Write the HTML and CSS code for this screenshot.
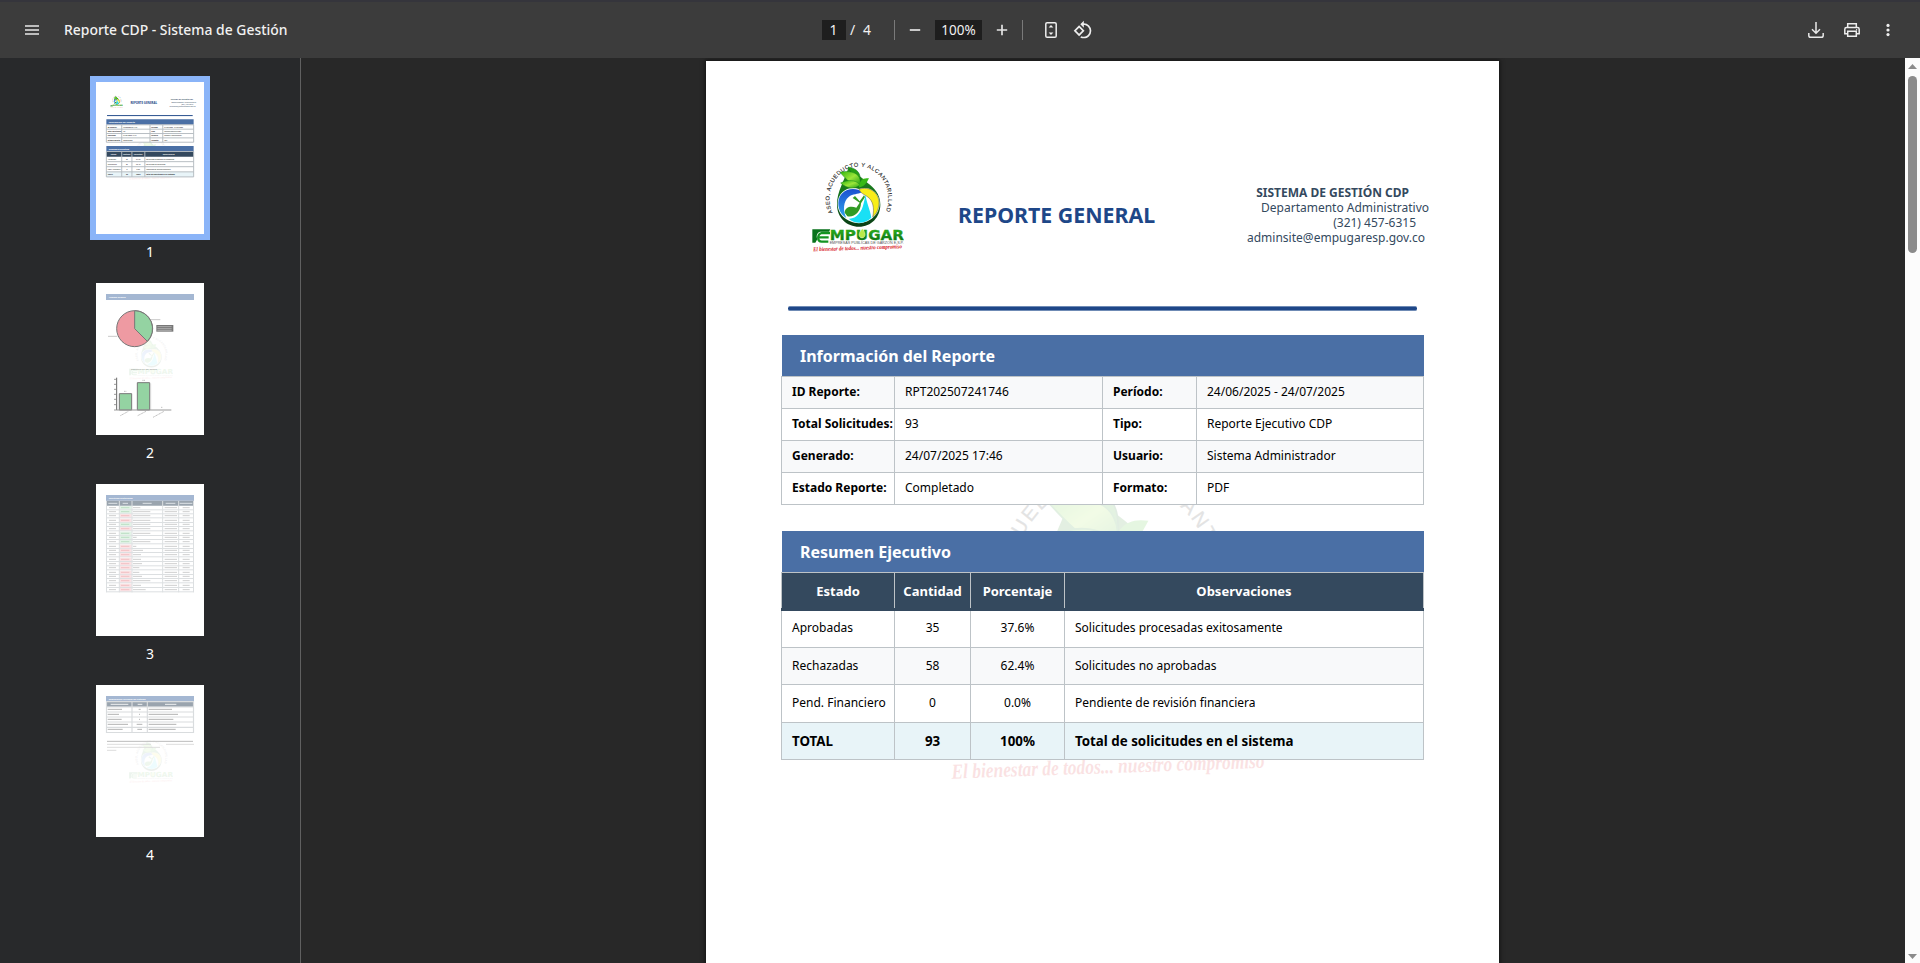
FILE: index.html
```html
<!DOCTYPE html>
<html lang="es">
<head>
<meta charset="utf-8">
<title>Reporte CDP - Sistema de Gestión</title>
<link rel="stylesheet" href="styles.css">
</head>
<body>
<svg class="defs" width="0" height="0" aria-hidden="true">
  <defs>
    <linearGradient id="drop" x1="0" y1="0" x2="0" y2="1"><stop offset="0" stop-color="#2c8f1a"/><stop offset=".5" stop-color="#0f6d1e"/><stop offset="1" stop-color="#0a3d14"/></linearGradient>
    <linearGradient id="leaf" x1="0" y1="0" x2="1" y2="1"><stop offset="0" stop-color="#2fb50c"/><stop offset=".5" stop-color="#9be53a"/><stop offset="1" stop-color="#1d9c12"/></linearGradient>
    <linearGradient id="blue" x1="0" y1="0" x2="0" y2="1"><stop offset="0" stop-color="#1c4fd0"/><stop offset="1" stop-color="#2fa6ee"/></linearGradient>
    <linearGradient id="word" x1="0" y1="0" x2="0" y2="1"><stop offset="0" stop-color="#35c11d"/><stop offset="1" stop-color="#076012"/></linearGradient>
    <symbol id="logo" viewBox="96 60 276 276">
      <path id="arc" d="M158 219A88 96 0 1 1 317 215" fill="none"/>
      <text font-family="Liberation Sans" font-size="17" fill="#222" stroke="#222" stroke-width=".3"><textPath href="#arc" textLength="386" lengthAdjust="spacing">ASEO, ACUEDUCTO Y ALCANTARILLADO</textPath></text>
      <path d="M205 84C192 125 171 154 171 194C171 232 200 260 237 260C274 260 301 231 301 194C301 160 280 142 262 128C240 108 222 96 205 84Z" fill="url(#drop)"/>
      <path d="M237 147C205 137 173 155 173 192C173 225 203 248 237 250C271 248 299 223 299 190C299 156 266 136 237 147Z" fill="#fff"/>
      <path d="M237 150C205 139 175 158 175 190C175 210 184 225 199 234C188 211 190 184 206 171C219 161 233 164 245 157Z" fill="url(#blue)"/>
      <path d="M237 148C268 137 297 158 297 188C297 206 290 221 278 231C284 205 279 181 262 170C253 163 241 160 237 148Z" fill="#f8ee18" stroke="#555" stroke-width="1.5"/>
      <path d="M206 236C228 238 246 216 251 190L257 164C259 188 270 206 274 233C254 253 224 252 206 236Z" fill="#19e0f5"/>
      <path d="M194 218C195 202 211 197 229 203L239 188L218 174L225 168L239 184L252 166L255 171L243 190C242 215 224 233 202 229Z" fill="#319b24"/>
      <path d="M204 81C230 85 246 98 240 133C225 120 216 103 204 81Z" fill="#259e14" stroke="#0f6d1e" stroke-width="1.5"/>
      <path d="M180 97C203 91 231 96 238 113C242 121 241 128 240 137C214 134 203 123 180 97Z" fill="url(#leaf)" stroke="#17871a" stroke-width="1.5"/>
      <path d="M182 129C202 119 227 118 240 135C223 149 203 147 182 129Z" fill="url(#leaf)" stroke="#17871a" stroke-width="1.5"/>
      <path d="M267 115C248 112 238 122 237 142C254 140 259 130 267 115Z" fill="#36b915"/>
      <path d="M97 268H151L147 275H120C111 278 108 287 112 298L106 308H97Z" fill="#08721b"/>
      <path d="M150 279H125C111 283 111 305 125 305H145M118 292H146" fill="none" stroke="#149322" stroke-width="7"/>
      <text x="149" y="300" font-family="DejaVu Sans" font-weight="bold" font-size="43" textLength="223" lengthAdjust="spacingAndGlyphs" fill="url(#word)" stroke="#169a18">MPUGAR</text>
      <path d="M247 266C235 278 233 291 246 294C259 291 258 279 247 266Z" fill="#b9ea4a" stroke="#fff"/>
      <text x="149" y="311" font-family="Liberation Sans" font-size="10" textLength="222" lengthAdjust="spacingAndGlyphs" fill="#555">EMPRESAS PUBLICAS DE GARZON E.S.P.</text>
      <text x="100" y="334" transform="rotate(-2 100 334)" font-family="Liberation Serif" font-style="italic" font-weight="bold" font-size="18" textLength="266" lengthAdjust="spacingAndGlyphs" fill="#d7141c">El bienestar de todos... nuestro compromiso</text>
    </symbol>
  </defs>
</svg>

<header class="toolbar">
  <div class="tb-left">
    <svg class="i-menu" width="14" height="10" viewBox="0 0 14 10"><path d="M0 1H14M0 5H14M0 9H14" stroke="#e8e8e8" stroke-width="1.6"/></svg>
    <span class="doc-title">Reporte CDP - Sistema de Gestión</span>
  </div>
  <div class="tb-center">
    <span class="box page-no">1</span><span class="slash">/</span><span class="total">4</span>
    <i class="sep sep-a"></i>
    <svg class="i-minus" width="12" height="12" viewBox="0 0 12 12"><path d="M.8 6H11.2" stroke="#e4e4e4" stroke-width="1.7"/></svg>
    <span class="box zoom">100%</span>
    <svg class="i-plus" width="12" height="12" viewBox="0 0 12 12"><path d="M.8 6H11.2M6 .8V11.2" stroke="#e4e4e4" stroke-width="1.7"/></svg>
    <i class="sep sep-b"></i>
    <svg class="i-fit" width="12" height="16" viewBox="0 0 12 16"><rect x=".8" y=".8" width="10.4" height="14.4" rx="1.3" fill="none" stroke="#eee" stroke-width="1.5"/><path d="M6 3L8.4 5.6H3.600ZM6 13L8.4 10.4H3.600Z" fill="#eee"/></svg>
    <svg class="i-rot" width="20" height="20" viewBox="0 0 24 24"><path fill="#eee" d="M7.34 6.41.86 12.9l6.49 6.48 6.49-6.48-6.5-6.49zM3.69 12.9l3.66-3.66L11 12.9l-3.66 3.66-3.65-3.66zm15.67-6.26A8.95 8.95 0 0 0 13 4V.76L8.76 5 13 9.24V6c1.79 0 3.58.68 4.95 2.05a7.007 7.007 0 0 1 0 9.9 6.973 6.973 0 0 1-7.79 1.44l-1.49 1.49C10.02 21.62 11.51 22 13 22c2.3 0 4.61-.88 6.36-2.64a8.98 8.98 0 0 0 0-12.72z"/></svg>
  </div>
  <div class="tb-right">
    <svg width="16" height="16" viewBox="0 0 16 16" fill="none" stroke="#e8e8e8" stroke-width="1.5"><path d="M8 0V11M4 7.3L8 11.3L12 7.3M.8 11V13.4Q.8 15.2 2.6 15.2H13.4Q15.2 15.2 15.2 13.4V11"/></svg>
    <svg width="16" height="16" viewBox="0 0 16 16" fill="none" stroke="#eee" stroke-width="1.5"><path d="M3.7 5.5V1.8H12.3V5.5M3.7 11.7H.8V7.2Q.8 5.5 2.5 5.5H13.5Q15.2 5.5 15.2 7.2V11.7H12.3M3.7 9.3H12.3V14.3H3.7Z"/><circle cx="12.6" cy="7.7" r=".7" fill="#eee" stroke="none"/></svg>
    <svg width="16" height="16" viewBox="0 0 16 16" fill="#eee"><circle cx="8" cy="3.4" r="1.6"/><circle cx="8" cy="8" r="1.6"/><circle cx="8" cy="12.6" r="1.6"/></svg>
  </div>
</header>

<main class="body">
  <nav class="thumbs">
    <figure class="thumb active">
      <svg width="108" height="152" viewBox="706 61 794 1118" class="sheet t1">
        <use href="#logo" x="812" y="160" width="92" height="92"/>
        <g font-family="Noto Sans" font-size="12" fill="#111">
          <text x="959" y="223" font-size="21.3" font-weight="700" fill="#1e4788">REPORTE GENERAL</text>
          <g fill="#34495e" font-size="13"><text x="1256" y="197" font-weight="700">SISTEMA DE GESTIÓN CDP</text><text x="1261" y="212">Departamento Administrativo</text><text x="1333" y="227">(321) 457-6315</text><text x="1247" y="242">adminsite@empugaresp.gov.co</text></g>
          <path d="M787 308H1417" stroke="#1e4788" stroke-width="7"/>
          <use href="#logo" x="946" y="456" width="325" height="325" opacity=".12"/>
          <path d="M782 335H1424V376H782ZM782 531H1424V572H782Z" fill="#4a6fa5"/>
          <g fill="#fff" font-weight="700" font-size="16"><text x="800" y="362">Información del Reporte</text><text x="800" y="558">Resumen Ejecutivo</text></g>
          <path d="M782 376H1424V504H782ZM782 610H1424V722H782Z" fill="#fff"/><path d="M782 572H1424V610H782Z" fill="#34495e"/><path d="M782 722H1424V759H782Z" fill="#e8f4f8"/>
          <path d="M782 376H1424V504H782ZM782 408H1424M782 440H1424M782 472H1424M895 376V504M1103 376V504M1197 376V504M782 572H1424V759H782ZM782 647H1424M782 684H1424M782 722H1424M895 572V759M970 572V759M1065 572V759" fill="none" stroke="#b4bac0" stroke-width="7"/>
          <g font-weight="700"><text x="792" y="396">ID Reporte:</text><text x="792" y="428">Total Solicitudes:</text><text x="792" y="460">Generado:</text><text x="792" y="492">Estado Reporte:</text><text x="1113" y="396">Período:</text><text x="1113" y="428">Tipo:</text><text x="1113" y="460">Usuario:</text><text x="1113" y="492">Formato:</text></g>
          <text x="906" y="396">RPT202507241746</text><text x="906" y="428">93</text><text x="906" y="460">24/07/2025 17:46</text><text x="906" y="492">Completado</text><text x="1208" y="396">24/06/2025 - 24/07/2025</text><text x="1208" y="428">Reporte Ejecutivo CDP</text><text x="1208" y="460">Sistema Administrador</text><text x="1208" y="492">PDF</text>
          <g fill="#fff" font-weight="700"><text x="815" y="595">Estado</text><text x="904" y="595">Cantidad</text><text x="983" y="595">Porcentaje</text><text x="1197" y="595">Observaciones</text></g>
          <text x="792" y="632">Aprobadas</text><text x="926" y="632">35</text><text x="1001" y="632">37.6%</text><text x="1075" y="632">Solicitudes procesadas exitosamente</text>
          <text x="792" y="670">Rechazadas</text><text x="926" y="670">58</text><text x="1001" y="670">62.4%</text><text x="1075" y="670">Solicitudes no aprobadas</text>
          <text x="792" y="707">Pend. Financiero</text><text x="930" y="707">0</text><text x="1004" y="707">0.0%</text><text x="1075" y="707">Pendiente de revisión financiera</text>
          <g font-weight="700" font-size="13"><text x="792" y="746">TOTAL</text><text x="926" y="746">93</text><text x="1001" y="746">100%</text><text x="1075" y="746">Total de solicitudes en el sistema</text></g>
        </g>
      </svg>
      <figcaption>1</figcaption>
    </figure>
    <figure class="thumb">
      <svg width="108" height="152" viewBox="48 39 324 456" class="sheet">
        <path d="M78 72H342V90H78Z" fill="#a4b7d2"/>
        <text x="86" y="83" font-family="Noto Sans" font-weight="700" font-size="7" textLength="51" fill="#fff">Análisis Gráfico</text>
        <use href="#logo" x="147" y="197" width="132" height="132" opacity=".07"/>
        <g stroke="#777" stroke-width="3"><circle cx="164" cy="176" r="54" fill="#ee9aa2"/><path d="M164 176V122A54 54 0 0 1 202 214Z" fill="#94d3a2"/></g>
        <path d="M229 165H280V185H229Z" fill="#777"/><path d="M232 170H275M232 176H275M232 181H275" stroke="#ddd" stroke-width="1.6"/>
        <path d="M212 149H241M84 199H112" stroke="#bbb" stroke-width="2.4"/>
        <text x="153" y="300" font-family="Noto Sans" font-size="6.5" textLength="78" fill="#888">Comparativa por Estado</text>
        <path d="M118 371H155V420H118ZM172 338H209V420H172Z" fill="#94d3a2" stroke="#777" stroke-width="3"/>
        <path d="M212 340V420" stroke="#ccc" stroke-width="2"/>
        <path d="M110 323V420" fill="none" stroke="#666" stroke-width="3"/><path d="M109 420H274" stroke="#999" stroke-width="3.5"/>
        <path d="M102 328H109M102 343H109M102 358H109M102 373H109M102 388H109M102 404H109M102 420H109" stroke="#888" stroke-width="2.5"/>
        <path d="M132 364H139M187 331H195M243 412H248M121 437L145 424M173 437L198 424M219 442L252 424" stroke="#aaa" stroke-width="2.2" stroke-dasharray="4 1"/>
      </svg>
      <figcaption>2</figcaption>
    </figure>
    <figure class="thumb">
      <svg width="108" height="152" viewBox="48 27 324 456" class="sheet" id="listing">
        <path d="M78 60H342V77H78Z" fill="#a4b7d2"/>
        <text x="86" y="72" font-family="Noto Sans" font-weight="700" font-size="6.5" textLength="72" fill="#fff">Solicitudes Detalladas</text>
        <path d="M78 77H342V92H78Z" fill="#9aa4ae"/>
        <path d="M85 85H112M128 85H144M188 85H215M257 85H286M299 85H337" stroke="#dde1e6" stroke-width="3"/>
      </svg>
      <figcaption>3</figcaption>
    </figure>
    <figure class="thumb">
      <svg width="108" height="152" viewBox="48 30 324 456" class="sheet">
        <use href="#logo" x="147" y="192" width="132" height="132" opacity=".07"/>
        <path d="M78 63H342V79H78Z" fill="#a4b7d2"/>
        <text x="86" y="75" font-family="Noto Sans" font-weight="700" font-size="6.5" textLength="111" fill="#fff">Información Adicional del Sistema</text>
        <path d="M78 79H342V174H78Z" fill="#fff"/><path d="M78 81H342V95H78Z" fill="#9aa4ae"/>
        <path d="M79.500 80H340.500V172.500H79.500ZM79 96H341M79 111H341M79 126H341M79 141H341M79 157H341M156 80V173M202 80V173" fill="none" stroke="#d9dcde" stroke-width="3.500"/>
        <path d="M92 88H145M173 88H187M255 88H289" stroke="#eef0f2" stroke-width="3"/>
        <path d="M83 103H126M176 103H182M206 103H276M83 118H117M177 118H180M206 118H294M83 133H125M177 133H180M206 133H280M83 148H144M170 148H187M206 148H289M83 163H128M172 163H186M206 163H287" stroke="#b3b3b3" stroke-width="3"/>
        <path d="M81 199H339" stroke="#bbb" stroke-width="3"/><path d="M81 208H213M258 208H342M81 217H240M81 226H109" stroke="#d6d6d6" stroke-width="2.500"/>
      </svg>
      <figcaption>4</figcaption>
    </figure>
  </nav>

  <section class="viewer">
    <article class="page">
      <svg class="watermark" width="325" height="325"><use href="#logo" width="325" height="325"/></svg>
      <header class="report-head">
        <svg class="logo" width="92" height="92"><use href="#logo" width="92" height="92"/></svg>
        <h1>REPORTE GENERAL</h1>
        <address>
          <strong>SISTEMA DE GESTIÓN CDP</strong>
          <span class="dept">Departamento Administrativo</span>
          <span class="phone">(321) 457-6315</span>
          <span class="mail">adminsite@empugaresp.gov.co</span>
        </address>
      </header>
      <div class="rule"></div>
      <h2>Información del Reporte</h2>
      <table class="info">
        <colgroup><col class="c113"><col class="c208"><col class="c94"><col class="c227"></colgroup>
        <tr><th>ID Reporte:</th><td>RPT202507241746</td><th>Período:</th><td>24/06/2025 - 24/07/2025</td></tr>
        <tr><th>Total Solicitudes:</th><td>93</td><th>Tipo:</th><td>Reporte Ejecutivo CDP</td></tr>
        <tr><th>Generado:</th><td>24/07/2025 17:46</td><th>Usuario:</th><td>Sistema Administrador</td></tr>
        <tr><th>Estado Reporte:</th><td>Completado</td><th>Formato:</th><td>PDF</td></tr>
      </table>
      <h2 class="second">Resumen Ejecutivo</h2>
      <table class="summary">
        <colgroup><col class="c113"><col class="c76"><col class="c94"><col class="c359"></colgroup>
        <thead><tr><th>Estado</th><th>Cantidad</th><th>Porcentaje</th><th>Observaciones</th></tr></thead>
        <tbody>
        <tr class="first"><td>Aprobadas</td><td>35</td><td>37.6%</td><td>Solicitudes procesadas exitosamente</td></tr>
        <tr><td>Rechazadas</td><td>58</td><td>62.4%</td><td>Solicitudes no aprobadas</td></tr>
        <tr><td>Pend. Financiero</td><td>0</td><td>0.0%</td><td>Pendiente de revisión financiera</td></tr>
        <tr class="sum"><td>TOTAL</td><td>93</td><td>100%</td><td>Total de solicitudes en el sistema</td></tr>
        </tbody>
      </table>
    </article>
  </section>
  <div class="scrollbar">
    <svg width="9" height="5" viewBox="0 0 9 5"><path d="M4.500 0L9 5H0Z" fill="#8b8b8b"/></svg>
    <div class="handle"></div>
    <svg class="down" width="9" height="5" viewBox="0 0 9 5"><path d="M4.500 5L9 0H0Z" fill="#8b8b8b"/></svg>
  </div>
</main>
<script src="thumbs.js"></script>
</body>
</html>
```
FILE: styles.css
```css
* { box-sizing: border-box; }
body { margin: 0; height: 963px; overflow: hidden; display: flex; flex-direction: column; background: #282828; font-family: "Noto Sans", sans-serif; }
.defs { position: absolute; }
svg { display: block; flex: none; }

.toolbar { height: 58px; flex: none; display: grid; grid-template-columns: 822px 1fr auto; align-items: center; background: #3c3c3c; border-top: 2px solid #35353c; color: #f1f1f1; }
.tb-left, .tb-center, .tb-right { display: flex; align-items: center; }
.tb-left { padding-left: 25px; }
.doc-title { margin-left: 25px; font-size: 13.920px; font-weight: 500; line-height: 20px; }
.tb-center { font-size: 14px; line-height: 20px; }
.box { height: 20px; background: #1e1e1e; text-align: center; }
.page-no { width: 24px; padding-right: 1px; }
.slash { margin-left: 4px; width: 13px; }
.total { width: 8px; }
.sep { width: 1px; height: 20px; background: #7a7a7a; }
.sep-a { margin-left: 23px; }
.i-minus { margin-left: 14px; }
.zoom { width: 47px; margin-left: 14px; font-size: 13.500px; }
.i-plus { margin-left: 14px; }
.sep-b { margin-left: 14px; }
.i-fit { margin-left: 22px; }
.i-rot { margin-left: 16px; }
.tb-right { gap: 20px; padding-right: 24px; }

.body { flex: 1; min-height: 0; display: flex; }
.thumbs { width: 301px; flex: none; background: #28292b; border-right: 1px solid #606060; padding-top: 18px; display: flex; flex-direction: column; align-items: center; }
.thumb { margin: 0; height: 201px; flex: none; display: flex; flex-direction: column; align-items: center; }
.sheet { margin: 6px; background: #fff; }
.active .sheet { outline: 6px solid #8ab4f8; }
figcaption { margin-top: 2px; color: #fff; font-size: 14px; line-height: 20px; }

.viewer { flex: 1; padding: 3px 0 0 405px; overflow: hidden; }
.page { position: relative; width: 793px; height: 1123px; background: #fff; box-shadow: 0 0 4px 1px #141414; z-index: 0; }
.watermark { position: absolute; z-index: -1; left: 241px; top: 395px; opacity: .12; }
.report-head { height: 245px; padding: 99px 70px 0 106px; display: flex; align-items: flex-start; }
h1 { margin: 40px 0 0 54px; font-size: 21.330px; line-height: 30px; color: #1e4788; white-space: nowrap; }
address { margin: 25px 0 0 auto; font-style: normal; font-size: 12px; line-height: 15px; color: #34495e; display: flex; flex-direction: column; align-items: flex-end; white-space: nowrap; }
address strong { margin-right: 20px; }
.phone { margin-right: 13px; }
.mail { margin-right: 4px; letter-spacing: .02px; }
.rule { height: 5px; margin: 0 82px 24px; background: #1e4788; border: solid #6f8bb5; border-width: 1px 0; border-radius: 2px; }
h2 { margin: 0 0 0 76px; width: 642px; height: 41px; padding-left: 18px; font-size: 16px; line-height: 42px; color: #fff; background: #4a6fa5; }
.second { margin-top: 26px; }
table { margin-left: 75px; width: 643px; table-layout: fixed; border-collapse: collapse; font-size: 12px; line-height: 16px; color: #000; }
.c113 { width: 113px; } .c208 { width: 208px; } .c94 { width: 94px; } .c227 { width: 227px; } .c76 { width: 76px; } .c359 { width: 359px; }
th, td { padding: 0 0 2px 10px; border: 1px solid #bdc3c7; text-align: left; white-space: nowrap; background: #fff; }
.info tr { height: 32px; }
.info tr:nth-child(odd) > * { background: #f8f9fa; }
.summary thead tr { height: 37px; }
.summary thead th { background: #34495e; color: #fff; text-align: center; padding: 0; border-bottom: 3px solid #34495e; font-size: 13px; }
.summary tbody tr { height: 37.500px; }
.summary tbody tr:nth-child(even) td { background: #f8f9fa; }
.summary td { padding-bottom: 0; }
.summary td:nth-child(2), .summary td:nth-child(3) { text-align: center; padding-left: 0; }
.summary tbody .first td { padding-bottom: 2px; }
.summary tbody tr.sum td { background: #e8f4f8; font-weight: 700; font-size: 13.330px; padding-top: 1px; }

.scrollbar { width: 15px; flex: none; background: #fcfcfc; padding: 6px 0 4px; display: flex; flex-direction: column; align-items: center; }
.handle { width: 9px; height: 177px; margin-top: 7px; border-radius: 5px; background: #8b8b8b; }
.down { margin-top: auto; }
```
FILE: thumbs.js
```js
// Rows of the request listing on the third page: vertical centre, status, description width.
const rows = [[98,1,22],[110,1,52],[122,0,52],[136,0,52],[148,1,52],[161,0,52],[175,1,52],[187,1,11],[200,1,52],[214,0,10],[226,0,30],[239,0,24],[253,0,24],[266,0,27],[278,0,19],[292,0,19],[304,0,27],[317,0,52],[331,0,24],[344,0,38]];
let out = '';
rows.forEach(([y, ok, w]) => {
  out += `<path d="M119 ${y - 5}H155V${y + 6}H119Z" fill="${ok ? '#e3f4e7' : '#fbe3e5'}"/>`
    + `<path d="M123 ${y}H148" stroke="${ok ? '#b4dabd' : '#efb9bd'}" stroke-width="2.500"/>`
    + `<path d="M87 ${y}H108M159 ${y}H${159 + w}M254 ${y}H291M308 ${y}H329" stroke="#c4c4c4" stroke-width="2.500"/>`
    + `<path d="M79 ${y + 6.5}H341" stroke="#dcdfe1" stroke-width="3"/>`;
});
out += '<path d="M79.500 78V352M118 78V352M156 78V352M248 78V352M296 78V352M340.500 78V352" stroke="#dcdfe1" stroke-width="3"/>';
document.getElementById('listing').insertAdjacentHTML('beforeend', out);
```
